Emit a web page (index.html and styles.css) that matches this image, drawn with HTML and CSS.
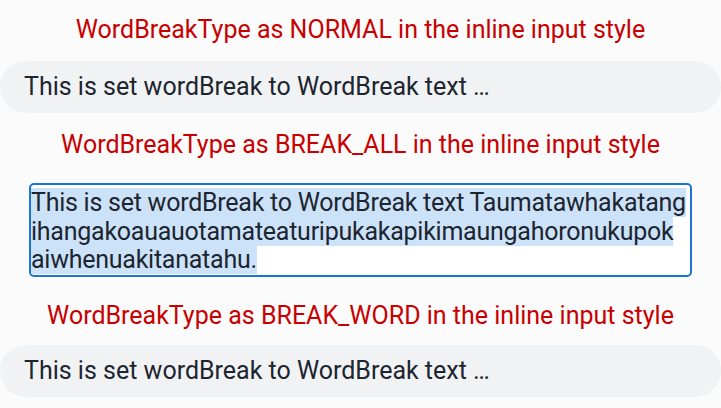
FILE: index.html
```html
<!DOCTYPE html>
<html lang="en">
<head>
<meta charset="utf-8">
<title>WordBreak</title>
<link rel="stylesheet" href="styles.css">
</head>
<body>
<main class="page">
  <h2 class="title title-first">WordBreakType as NORMAL in the inline input style</h2>
  <div class="input inline">This is set wordBreak to WordBreak text …</div>
  <h2 class="title title-second">WordBreakType as BREAK_ALL in the inline input style</h2>
  <div class="input editing"><span class="selected">This is set wordBreak to WordBreak text Taumatawhakatang<br>ihangakoauauotamateaturipukakapikimaungahoronukupok<br>aiwhenuakitanatahu.</span></div>
  <h2 class="title title-third">WordBreakType as BREAK_WORD in the inline input style</h2>
  <div class="input inline">This is set wordBreak to WordBreak text …</div>
</main>
</body>
</html>
```

FILE: styles.css
```css
html, body {
  margin: 0;
  padding: 0;
  background: #fbfbfb;
}
.page {
  width: 721px;
  height: 408px;
  display: flex;
  flex-direction: column;
  align-items: center;
  font-family: Roboto, "Noto Sans", sans-serif;
  overflow: hidden;
}
.title {
  margin: 0;
  font-weight: 400;
  font-size: 25px;
  line-height: 30px;
  height: 30px;
  color: #c80000;
  white-space: nowrap;
}
.title-first { margin-top: 15px; margin-bottom: 16px; }
.title-second { margin-top: 17px; margin-bottom: 23px; }
.title-third { margin-top: 24px; margin-bottom: 14px; }
.input {
  box-sizing: border-box;
  font-size: 25px;
  color: #1c2530;
}
.inline {
  width: 721px;
  height: 52px;
  border-radius: 26px;
  background: #f1f2f3;
  padding: 0 24px;
  line-height: 52px;
  white-space: nowrap;
  overflow: hidden;
}
.editing {
  width: 663px;
  height: 94px;
  border: 2px solid #1a74d4;
  border-radius: 5px;
  background: #ffffff;
  padding: 4px 0 0 0;
  line-height: 28.5px;
  letter-spacing: -0.25px;
  word-break: break-all;
}
.selected {
  background: #cce2f8;
}
```
